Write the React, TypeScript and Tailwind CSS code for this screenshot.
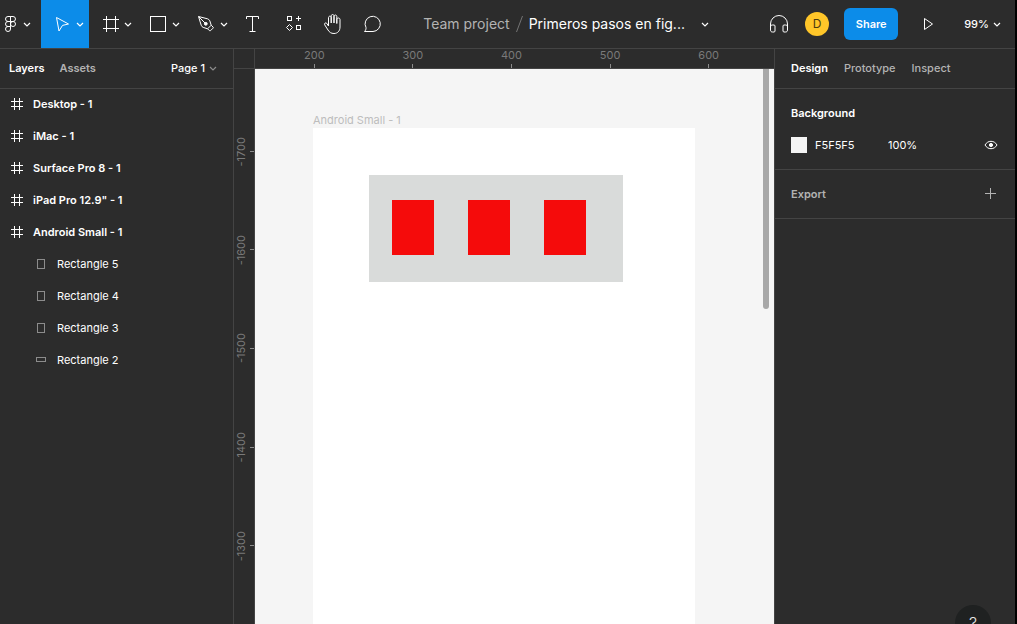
import type { ReactNode } from "react";

function Icon({ children, className = "size-6" }: { children: ReactNode; className?: string }) {
  return (
    <svg viewBox="0 0 24 24" fill="none" stroke="currentColor" aria-hidden="true" className={`shrink-0 ${className}`}>
      {children}
    </svg>
  );
}

function Chevron({ className = "text-white" }: { className?: string }) {
  return (
    <svg
      viewBox="0 0 8 8"
      fill="none"
      stroke="currentColor"
      strokeWidth="1.2"
      aria-hidden="true"
      className={`size-2 shrink-0 ${className}`}
    >
      <path d="M1 3l3 3 3-3" />
    </svg>
  );
}

const menuTools = [
  {
    name: "Move",
    active: true,
    icon: <path d="M5.5 5.5L17.5 12l-6 1.4L8 19z" strokeLinejoin="round" />,
  },
  {
    name: "Frame",
    active: false,
    icon: <path d="M7.5 4v16M16.5 4v16M4 7.5h16M4 16.5h16" />,
  },
  {
    name: "Rectangle",
    active: false,
    icon: <rect x="3.5" y="4.5" width="15" height="15" />,
  },
  {
    name: "Pen",
    active: false,
    icon: (
      <>
        <path
          d="M3.5 4.5l9 2.3c1 .3 1.8 1 2.3 2l1.4 4.4-3.6 3.6-4.4-1.4c-1-.4-1.7-1.2-2-2.2zM3.7 4.7l6.3 6.3"
          strokeLinejoin="round"
        />
        <circle cx="10.8" cy="11.8" r="1.4" fill="currentColor" />
        <path
          d="M16.2 13.2l1.8 1.8c.4.4.4.8 0 1.2l-2.4 2.4c-.4.4-.8.4-1.2 0l-1.8-1.8"
          strokeLinejoin="round"
        />
      </>
    ),
  },
];

const tools = [
  { name: "Text", icon: <path d="M5.5 7V4.5h12V7M11.5 4.5v15M8.5 19.5h6" /> },
  {
    name: "Resources",
    icon: (
      <>
        <rect x="6.5" y="4.5" width="4" height="4" />
        <path d="M17.5 4v5M15 6.5h5M8.5 12.5l3 3-3 3-3-3z" />
        <rect x="15.5" y="13.5" width="4" height="4" />
      </>
    ),
  },
  {
    name: "Hand",
    icon: (
      <path
        d="M7.5 14V5.7c0-2 2.7-2 2.7 0V11 4c0-2 2.8-2 2.8 0v7V4.500c0-2 2.8-2 2.8 0V11.500V7.500c0-2 3.200-2 3.200 0V15c0 4-2.500 6.500-6 6.500-3 0-4.500-1.200-6-3.500l-3.300-5.200c-.8-1.400 1-2.600 2-1.500z"
        strokeLinejoin="round"
      />
    ),
  },
  {
    name: "Comment",
    icon: <path d="M3.5 19.5c1-1 1.7-2.2 1.5-4A7.6 7.6 0 1 1 12 19.500z" strokeLinejoin="round" />,
  },
];

const frames = ["Desktop - 1", "iMac - 1", "Surface Pro 8 - 1", 'iPad Pro 12.9" - 1', "Android Small - 1"];

const shapes = [
  { name: "Rectangle 5", wide: false },
  { name: "Rectangle 4", wide: false },
  { name: "Rectangle 3", wide: false },
  { name: "Rectangle 2", wide: true },
];

function Toolbar() {
  return (
    <header className="flex h-[49px] shrink-0 items-center justify-between border-b border-[#444444]">
      <div className="flex h-12">
        <button aria-label="Main menu" className="flex w-[41px] items-center gap-[3px]">
          <svg viewBox="0 0 20 24" fill="none" stroke="currentColor" aria-hidden="true" className="h-6 w-5 shrink-0">
            <path d="M10.5 4.5H8a2.5 2.5 0 0 0 0 5h2.5zM10.5 4.5H13a2.5 2.5 0 0 1 0 5h-2.5zM10.5 9.5H8a2.5 2.5 0 0 0 0 5h2.5zM10.5 14.5H8a2.5 2.5 0 1 0 2.5 2.5z" />
            <circle cx="13" cy="12" r="2.5" />
          </svg>
          <Chevron />
        </button>
        {menuTools.map((tool) => (
          <button
            key={tool.name}
            aria-label={tool.name}
            className={`flex w-12 items-center gap-px pl-2.5 ${tool.active ? "bg-[#0c8ce9]" : ""}`}
          >
            <Icon>{tool.icon}</Icon>
            <Chevron />
          </button>
        ))}
        {tools.map((tool) => (
          <button key={tool.name} aria-label={tool.name} className="flex w-10 items-center justify-center">
            <Icon>{tool.icon}</Icon>
          </button>
        ))}
      </div>

      <div className="mr-7 flex items-center text-sm">
        <a href="#project" className="text-[#b3b3b3]">
          Team project
        </a>
        <svg viewBox="0 0 7 18" fill="none" aria-hidden="true" className="mx-1.5 h-[18px] w-[7px] stroke-[#757575]">
          <path d="M6.5 1L.5 17" />
        </svg>
        <button className="flex items-center gap-4">
          Primeros pasos en fig...
          <Chevron />
        </button>
      </div>

      <div className="flex items-center pr-3.5">
        <button aria-label="Start conversation">
          <Icon>
            <path d="M3.5 18v-6a8.5 8.5 0 0 1 17 0v6" />
            <path d="M3.5 15c0-1.3.7-2 2-2H7c.6 0 1 .4 1 1v5c0 .6-.4 1-1 1H5.5c-1.3 0-2-.7-2-2zM20.5 15c0-1.3-.7-2-2-2H17c-.6 0-1 .4-1 1v5c0 .6.4 1 1 1h1.500c1.3 0 2-.7 2-2z" />
          </Icon>
        </button>
        <button
          aria-label="Account"
          className="ml-3.5 size-6 rounded-full bg-[#ffc629] text-xs text-[#4a3a10]"
        >
          D
        </button>
        <button className="ml-[15px] h-8 w-[54px] rounded-md bg-[#0c8ce9] font-semibold">Share</button>
        <button aria-label="Present" className="ml-[18px]">
          <Icon>
            <path d="M8.5 6.5v11l8-5.5z" strokeLinejoin="round" />
          </Icon>
        </button>
        <button className="ml-6 flex items-center gap-1 font-medium">
          99%
          <Chevron />
        </button>
      </div>
    </header>
  );
}

function LayersPanel() {
  return (
    <aside className="w-[234px] shrink-0 border-r border-[#444444]">
      <div className="flex h-10 items-center border-b border-[#444444] pr-4 pb-px pl-[9px] font-semibold">
        <button>Layers</button>
        <button className="ml-[15px] text-[#b3b3b3]">Assets</button>
        <button className="ml-auto flex items-center gap-1 font-medium">
          Page 1
          <Chevron className="text-[#8c8c8c]" />
        </button>
      </div>
      <ul>
        {frames.map((name) => (
          <li key={name}>
            <button className="flex h-8 w-full items-center gap-2.5 pb-0.5 pl-[11px] font-semibold">
              <svg viewBox="0 0 12 12" stroke="currentColor" aria-hidden="true" className="size-3">
                <path d="M3.5 0v12M8.5 0v12M0 3.5h12M0 8.5h12" />
              </svg>
              {name}
            </button>
          </li>
        ))}
        {shapes.map((shape) => (
          <li key={shape.name}>
            <button className="flex h-8 w-full items-center gap-2.5 pb-0.5 pl-[35px]">
              <svg viewBox="0 0 12 12" fill="none" aria-hidden="true" className="size-3 stroke-[#8c8c8c]">
                {shape.wide ? (
                  <rect x="1.5" y="3.5" width="9" height="4" />
                ) : (
                  <rect x="2.5" y="1.5" width="7" height="9" />
                )}
              </svg>
              {shape.name}
            </button>
          </li>
        ))}
      </ul>
    </aside>
  );
}

function Canvas() {
  return (
    <main className="grid min-w-0 flex-1 grid-cols-[21px_minmax(0,1fr)] grid-rows-[20px_minmax(0,1fr)] text-[#7a7a7a]">
      <div className="border-r border-b border-[#444444]" />
      <div className="overflow-hidden border-b border-[#444444] pl-2.5">
        <div className="flex h-full w-[493px]">
          {[200, 300, 400, 500, 600].map((mark) => (
            <div key={mark} className="flex flex-1 flex-col items-center justify-between leading-3">
              {mark}
              <span className="h-1 w-px bg-[#8c8c8c]" />
            </div>
          ))}
        </div>
      </div>
      <div className="overflow-hidden border-r border-[#444444] pt-[33px]">
        <div className="flex h-[493px] flex-col">
          {[-1700, -1600, -1500, -1400, -1300].map((mark) => (
            <div key={mark} className="flex flex-1 items-center justify-between leading-[14px]">
              <span className="rotate-180 [writing-mode:vertical-rl]">{mark}</span>
              <span className="h-px w-1 bg-[#8c8c8c]" />
            </div>
          ))}
        </div>
      </div>
      <div className="relative overflow-hidden bg-[#f5f5f5]">
        <div className="absolute top-[43px] left-[58px] leading-4 text-[#bdbdbd]">Android Small - 1</div>
        <div className="absolute top-[59px] left-[58px] h-[634px] w-[382px] bg-white">
          <div className="absolute top-[47px] left-[56px] flex h-[107px] w-[254px] gap-[34px] bg-[#d9dbda] px-[23px] py-[25px]">
            <div className="h-[55px] w-[42px] bg-[#f50b0b]" />
            <div className="h-[55px] w-[42px] bg-[#f50b0b]" />
            <div className="h-[55px] w-[42px] bg-[#f50b0b]" />
          </div>
        </div>
        <div className="absolute top-0 right-[5px] h-60 w-1.5 rounded-b-full bg-[#a8a8a8]" />
      </div>
    </main>
  );
}

function DesignPanel() {
  return (
    <aside className="relative w-[241px] shrink-0 border-l border-[#444444]">
      <div className="flex h-10 items-center gap-4 border-b border-[#444444] px-4 pb-px font-medium text-[#b3b3b3]">
        <button className="font-semibold text-white">Design</button>
        <button>Prototype</button>
        <button>Inspect</button>
      </div>
      <section className="border-b border-[#444444] px-4 py-2">
        <h2 className="flex h-8 items-center font-semibold">Background</h2>
        <div className="flex h-8 items-center">
          <button aria-label="Background color" className="size-4 bg-[#f5f5f5]" />
          <input aria-label="Hex value" defaultValue="F5F5F5" className="ml-2 w-[73px] bg-transparent outline-none" />
          <input aria-label="Opacity" defaultValue="100%" className="w-10 bg-transparent outline-none" />
          <button aria-label="Toggle visibility" className="ml-auto">
            <svg viewBox="0 0 16 16" fill="none" stroke="currentColor" aria-hidden="true" className="size-4">
              <path
                d="M2 8c1.5-2.5 3.5-3.7 6-3.7s4.5 1.2 6 3.7c-1.5 2.5-3.5 3.7-6 3.7S3.5 10.5 2 8z"
                strokeLinejoin="round"
              />
              <circle cx="8" cy="8" r="1.6" fill="currentColor" />
            </svg>
          </button>
        </div>
      </section>
      <section className="flex h-[49px] items-center justify-between border-b border-[#444444] px-4 text-[#b3b3b3]">
        <h2 className="font-semibold">Export</h2>
        <button aria-label="Add export setting">
          <svg viewBox="0 0 16 16" stroke="currentColor" aria-hidden="true" className="size-4">
            <path d="M7.5 2v11M2 7.5h11" />
          </svg>
        </button>
      </section>
      <button
        aria-label="Help"
        className="absolute right-6 -bottom-[17px] size-9 rounded-full bg-[#1f2121] text-base font-light text-[#e6e6e6]"
      >
        ?
      </button>
    </aside>
  );
}

export default function App() {
  return (
    <div className="h-screen overflow-hidden bg-black pr-0.5 font-['Inter',sans-serif] text-[11px] leading-4 text-white">
      <div className="flex h-full flex-col bg-[#2c2c2c]">
        <Toolbar />
        <div className="flex min-h-0 flex-1 overflow-hidden">
          <LayersPanel />
          <Canvas />
          <DesignPanel />
        </div>
      </div>
    </div>
  );
}
